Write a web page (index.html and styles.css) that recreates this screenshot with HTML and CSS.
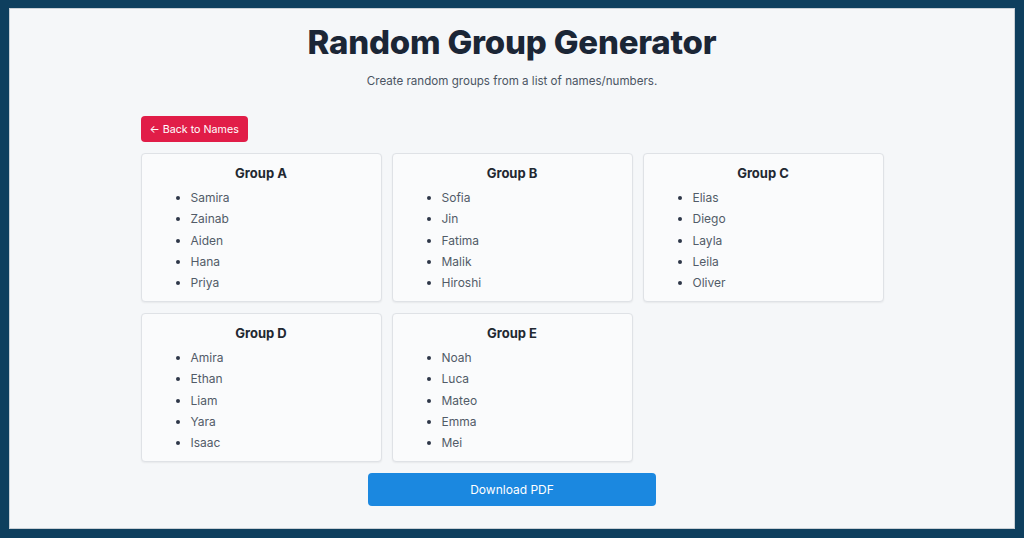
FILE: index.html
```html
<!DOCTYPE html>
<html lang="en">
<head>
<meta charset="utf-8">
<title>Random Group Generator</title>
<link rel="stylesheet" href="styles.css">
</head>
<body>
<div class="page">
  <h1 class="title">Random Group Generator</h1>
  <p class="subtitle">Create random groups from a list of names/numbers.</p>
  <div class="container">
    <div class="toolbar"><button class="back-btn">&larr; Back to Names</button></div>
    <div class="groups">
      <div class="card">
        <h2 class="card-title">Group A</h2>
        <ul class="names"><li>Samira</li><li>Zainab</li><li>Aiden</li><li>Hana</li><li>Priya</li></ul>
      </div>
      <div class="card">
        <h2 class="card-title">Group B</h2>
        <ul class="names"><li>Sofia</li><li>Jin</li><li>Fatima</li><li>Malik</li><li>Hiroshi</li></ul>
      </div>
      <div class="card">
        <h2 class="card-title">Group C</h2>
        <ul class="names"><li>Elias</li><li>Diego</li><li>Layla</li><li>Leila</li><li>Oliver</li></ul>
      </div>
      <div class="card">
        <h2 class="card-title">Group D</h2>
        <ul class="names"><li>Amira</li><li>Ethan</li><li>Liam</li><li>Yara</li><li>Isaac</li></ul>
      </div>
      <div class="card">
        <h2 class="card-title">Group E</h2>
        <ul class="names"><li>Noah</li><li>Luca</li><li>Mateo</li><li>Emma</li><li>Mei</li></ul>
      </div>
    </div>
    <div class="actions"><button class="download-btn">Download PDF</button></div>
  </div>
</div>
</body>
</html>
```
FILE: styles.css
```css
html, body {
  margin: 0;
  padding: 0;
  height: 100%;
}
body {
  background: #0e3f5e;
  padding: 8px 9px 9px 9px;
  box-sizing: border-box;
  font-family: "Inter", "Liberation Sans", sans-serif;
}
.page {
  background: #f5f7f9;
  height: 100%;
  box-sizing: border-box;
  padding-top: 14px;
  box-shadow: inset 0 0 0 1px #c9d0d6;
}
.title {
  margin: 0;
  text-align: center;
  font-family: "Inter", "Liberation Sans", sans-serif;
  font-weight: 800;
  font-size: 33px;
  line-height: 40px;
  color: #1b2636;
  letter-spacing: -0.2px;
}
.subtitle {
  margin: 10px 0 0 0;
  text-align: center;
  font-size: 11.6px;
  line-height: 18px;
  color: #4b5563;
}
.container {
  width: 743px;
  margin: 26px auto 0 auto;
}
.toolbar {
  display: flex;
}
.back-btn {
  background: #e11d48;
  color: #fff;
  border: none;
  border-radius: 4px;
  height: 26px;
  padding: 0 9px;
  font-family: "Inter", "Liberation Sans", sans-serif;
  font-size: 10.7px;
}
.groups {
  margin-top: 11px;
  display: grid;
  grid-template-columns: repeat(3, 1fr);
  column-gap: 10px;
  row-gap: 11px;
}
.card {
  background: #fafbfc;
  border: 1px solid #dfe2e6;
  border-radius: 4px;
  box-shadow: 0 1px 2px rgba(0,0,0,0.06);
  height: 149px;
  box-sizing: border-box;
  padding-top: 10px;
}
.card-title {
  margin: 0;
  text-align: center;
  font-size: 13px;
  font-weight: 700;
  line-height: 18px;
  color: #222831;
}
.names {
  margin: 5px 0 0 0;
  padding-left: 49px;
  font-size: 12px;
  line-height: 21.3px;
  color: #525b68;
}
.names li::marker {
  color: #2d3748;
}
.actions {
  display: flex;
  justify-content: center;
  margin-top: 11px;
}
.download-btn {
  width: 288px;
  height: 33px;
  background: #1b88e0;
  color: #fff;
  border: none;
  border-radius: 4px;
  font-family: "Inter", "Liberation Sans", sans-serif;
  font-size: 12px;
}
```
